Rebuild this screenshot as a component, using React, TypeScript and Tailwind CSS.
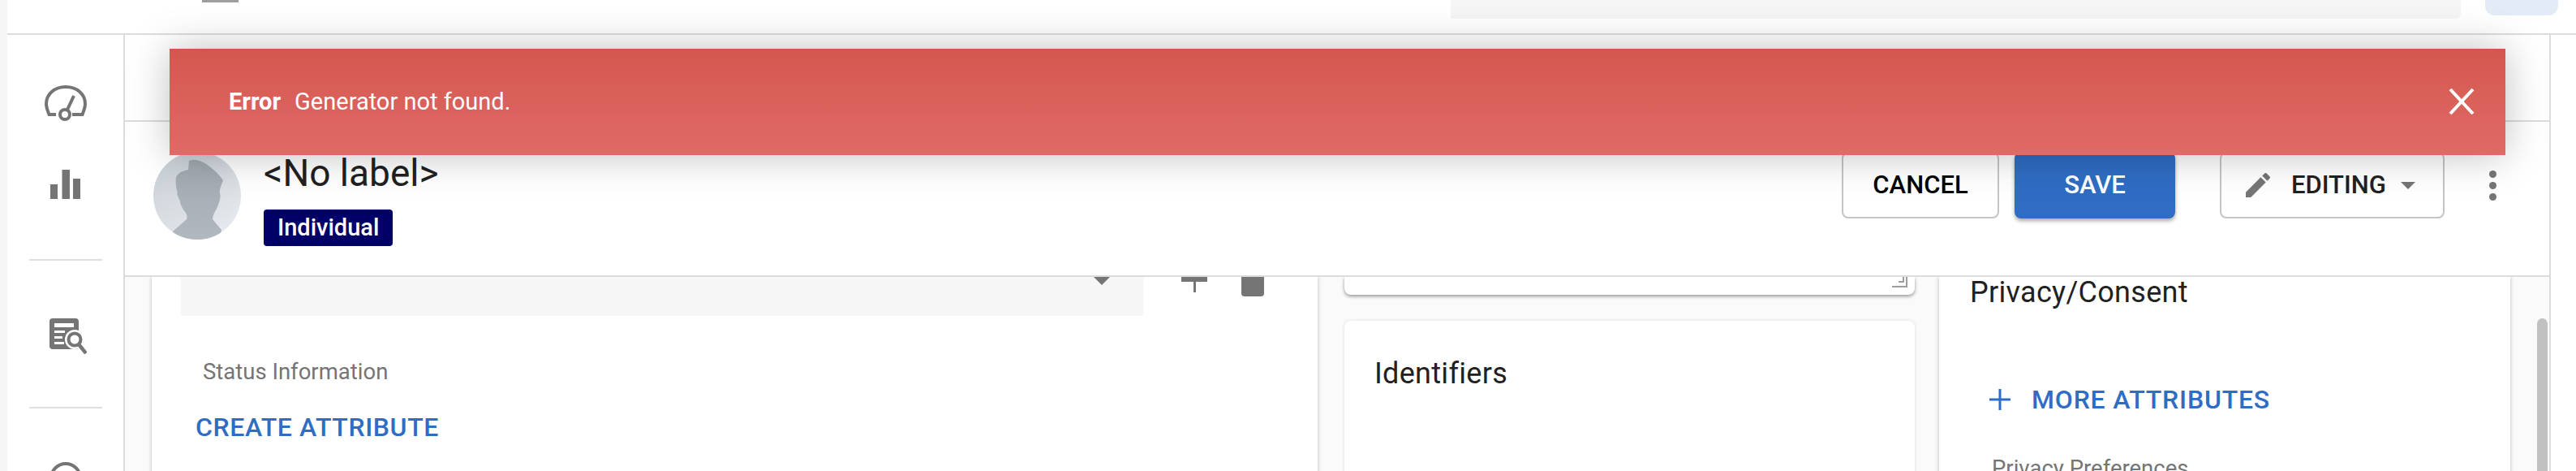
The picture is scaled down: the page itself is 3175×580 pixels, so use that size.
function GaugeIcon() {
  return (
    <svg width="52" height="44" viewBox="0 0 52 44" fill="none" stroke="#757575" strokeWidth="4" className="shrink-0">
      <path d="M14 36H5.500C3.500 31 2 27 2 23 2 11 12 2 26 2s24 9 24 21c0 4-1.500 8-3.500 13H34" />
      <circle cx="25" cy="36" r="6" />
      <path d="M28 30l8-17" strokeWidth="4" />
    </svg>
  );
}

function BarsIcon() {
  return (
    <svg width="37" height="36" viewBox="0 0 37 36" fill="#757575" className="block">
      <rect x="0" y="18" width="9" height="18" />
      <rect x="14.500" y="0" width="9.500" height="36" />
      <rect x="28" y="11" width="9" height="25" />
    </svg>
  );
}

function ListSearchIcon() {
  return (
    <svg width="46" height="44" viewBox="0 0 46 44" fill="none" className="block">
      <rect x="0" y="0" width="36" height="38" rx="4" fill="#757575" />
      <rect x="6" y="6" width="24" height="5" fill="#fff" />
      <rect x="6" y="15" width="13" height="3" fill="#fff" />
      <rect x="6" y="22" width="10" height="3" fill="#fff" />
      <rect x="6" y="29" width="12" height="3" fill="#fff" />
      <circle cx="31" cy="26" r="12" fill="#fff" />
      <circle cx="31" cy="26" r="7.500" stroke="#757575" strokeWidth="4" fill="#fff" />
      <path d="M36 32l9 11" stroke="#757575" strokeWidth="4.500" />
    </svg>
  );
}

function Avatar() {
  return (
    <svg width="108" height="108" viewBox="0 0 108 108" className="shrink-0">
      <defs>
        <linearGradient id="avatarBg" x1="0.2" y1="0" x2="0.8" y2="1">
          <stop offset="0" stopColor="#c8cfd5" />
          <stop offset="1" stopColor="#e8ebef" />
        </linearGradient>
        <linearGradient id="avatarFg" x1="0" y1="0" x2="0" y2="1">
          <stop offset="0" stopColor="#a1a8af" />
          <stop offset="1" stopColor="#b2b8bf" />
        </linearGradient>
        <clipPath id="avatarClip">
          <circle cx="54" cy="54" r="54" />
        </clipPath>
      </defs>
      <g clipPath="url(#avatarClip)">
        <rect width="108" height="108" fill="url(#avatarBg)" />
        <path
          d="M44 11c6-3 16 0 24 6 8 6 14 12 18 18-2 6-5 11-4 16 2 4-1 12-4 19-2 4-5 8-5 13l11 13-3 14H26l-2-12 17-15c1-3 0-5-1-8-3-3-7-10-7-14l-4-9 1-2c-2-4-3-14-2-19 2-5 9-8 15-9z"
          fill="url(#avatarFg)"
        />
      </g>
    </svg>
  );
}

export default function App() {
  return (
    <div className="relative flex h-[580px] w-[3175px] overflow-hidden bg-white font-['Roboto',sans-serif]">
      <div className="w-[9px] shrink-0 bg-[#f5f5f5]" />

      <div className="flex min-w-0 flex-1 flex-col">
        {/* top bar */}
        <div className="flex h-[43px] shrink-0 justify-between border-b-2 border-[#dcdcdc]">
          <div className="ml-[240px] h-[3px] w-[45px] bg-[#9e9e9e]" />
          <div className="flex items-start">
            <div className="h-[23px] w-[1245px] rounded-br-md bg-[#f5f5f5]" />
            <div className="ml-[30px] mr-[22px] h-[19px] w-[90px] rounded-b-xl bg-[#e3ecf6]" />
          </div>
        </div>

        <div className="flex min-h-0 flex-1">
          {/* sidebar */}
          <div className="flex w-[145px] shrink-0 flex-col items-center overflow-hidden border-r-2 border-[#dcdcdc] pt-[62px]">
            <GaugeIcon />
            <div className="mt-[60px] shrink-0">
              <BarsIcon />
            </div>
            <div className="mt-[74px] h-[2px] w-[90px] shrink-0 bg-[#e0e0e0]" />
            <div className="ml-[6px] mt-[71px] shrink-0">
              <ListSearchIcon />
            </div>
            <div className="mt-[65px] h-[2px] w-[90px] shrink-0 bg-[#e0e0e0]" />
            <div className="mt-[66px] h-[40px] w-[40px] shrink-0 rounded-full border-4 border-[#757575]" />
          </div>

          <div className="flex min-w-0 flex-1 flex-col">
            <div className="flex w-[2990px] flex-1 flex-col border-r-2 border-[#dcdcdc]">
              {/* tabs strip */}
              <div className="h-[107px] shrink-0 border-b-2 border-[#dcdcdc]" />

              {/* record header */}
              <div className="flex h-[191px] shrink-0 items-start border-b-2 border-[#dcdcdc] pl-[35px] pt-[37px]">
                <Avatar />
                <div className="ml-[28px] flex flex-col items-start">
                  <h1 className="text-[46px] font-normal leading-[52px] text-[#212121]">&lt;No label&gt;</h1>
                  <span className="mt-[19px] rounded-[4px] bg-[#000066] px-[17px] text-[29px] font-medium leading-[45px] text-white">
                    Individual
                  </span>
                </div>
                <div className="ml-auto flex items-start">
                  <button className="h-[82px] w-[194px] rounded-lg border-2 border-[#c4c4c4] bg-white text-[31px] font-medium text-black">
                    CANCEL
                  </button>
                  <button className="ml-[19px] h-[82px] w-[198px] rounded-lg bg-[#2f6dc4] text-[31px] font-medium text-white shadow-[0_3px_5px_rgba(0,0,0,0.35)]">
                    SAVE
                  </button>
                  <button className="ml-[55px] flex h-[82px] w-[277px] items-center rounded-lg border-2 border-[#c4c4c4] bg-white pl-[29px] text-[31px] font-medium text-[#212121]">
                    <svg width="40" height="40" viewBox="0 0 24 24" fill="#757575" className="-ml-[4px] shrink-0">
                      <path d="M3 17.250V21h3.750L17.810 9.940l-3.750-3.750L3 17.250zM20.710 7.040c.39-.39.39-1.020 0-1.410l-2.340-2.340c-.39-.39-1.020-.39-1.410 0l-1.830 1.830 3.750 3.750 1.830-1.830z" />
                    </svg>
                    <span className="ml-[21px]">EDITING</span>
                    <span className="ml-[18px] h-0 w-0 border-x-[9px] border-t-[9px] border-x-transparent border-t-[#757575]" />
                  </button>
                  <div className="ml-[55px] mr-[65px] flex h-[82px] flex-col items-center justify-center gap-[5px]">
                    <span className="h-[9px] w-[9px] rounded-full bg-[#757575]" />
                    <span className="h-[9px] w-[9px] rounded-full bg-[#757575]" />
                    <span className="h-[9px] w-[9px] rounded-full bg-[#757575]" />
                  </div>
                </div>
              </div>

              {/* form panels */}
              <div className="flex min-h-0 flex-1 overflow-hidden bg-[#fafafa]">
                <div className="ml-[33px] w-[1437px] shrink-0 bg-white pl-[36px] shadow-[0_0_5px_rgba(0,0,0,0.25)]">
                  <div className="flex items-start">
                    <div className="relative h-[48px] w-[1186px] bg-[#f6f6f6]">
                      <span className="absolute left-[1125px] top-0 h-0 w-0 border-x-[10px] border-t-[10px] border-x-transparent border-t-[#757575]" />
                    </div>
                    <div className="ml-[47px] flex flex-col items-center">
                      <div className="h-[6px] w-[32px] bg-[#757575]" />
                      <div className="h-[13px] w-[3px] bg-[#757575]" />
                    </div>
                    <div className="ml-[42px] h-[24px] w-[28px] rounded-b-[4px] bg-[#757575]" />
                  </div>
                  <p className="ml-[27px] mt-[53px] text-[27.500px] leading-[32px] text-[#757575]">Status Information</p>
                  <p className="ml-[18px] mt-[35px] text-[32px] font-medium leading-[34px] tracking-[0.6px] text-[#2f6dc4]">CREATE ATTRIBUTE</p>
                </div>

                <div className="ml-[33px] w-[703px] shrink-0">
                  <div className="relative h-[22px] rounded-b-lg bg-white shadow-[0_2px_4px_rgba(0,0,0,0.4)]">
                    <svg width="20" height="16" viewBox="0 0 20 16" className="absolute bottom-[8px] right-[8px]" fill="none" stroke="#9e9e9e" strokeWidth="2">
                      <path d="M0 14h18V0M8 8h6V0" />
                    </svg>
                  </div>
                  <div className="mt-[32px] h-[300px] rounded-lg bg-white pl-[37px] pt-[44px] shadow-[0_0_4px_rgba(0,0,0,0.12)]">
                    <p className="text-[36px] leading-[42px] tracking-[0.3px] text-[#212121]">Identifiers</p>
                  </div>
                </div>

                <div className="ml-[30px] w-[704px] shrink-0 bg-white pl-[38px] shadow-[0_0_5px_rgba(0,0,0,0.25)]">
                  <p className="text-[36px] leading-[38px] tracking-[0.3px] text-[#212121]">Privacy/Consent</p>
                  <div className="ml-[24px] mt-[96px] flex items-center text-[#2f6dc4]">
                    <svg width="26" height="26" viewBox="0 0 26 26" stroke="#2f6dc4" strokeWidth="3">
                      <path d="M13 0v26M0 13h26" />
                    </svg>
                    <span className="ml-[26px] text-[32px] font-medium leading-[34px] tracking-[0.8px]">MORE ATTRIBUTES</span>
                  </div>
                  <p className="ml-[27px] mt-[52px] whitespace-nowrap text-[27.500px] leading-[32px] text-[#757575]">Privacy Preferences</p>
                </div>

                {/* scrollbar */}
                <div className="ml-[33px] flex w-[13px] shrink-0 pt-[51px]">
                  <div className="h-[300px] w-[13px] rounded-t-full bg-[#c1c1c1]" />
                </div>
              </div>
            </div>
          </div>
        </div>
      </div>

      {/* error toast */}
      <div className="absolute left-[209px] top-[60px] flex h-[131px] w-[2879px] items-center justify-between bg-gradient-to-b from-[#d3574f] to-[#e16a66] pl-[73px] pr-[38px] text-[29px] text-white shadow-[0_0_50px_rgba(0,0,0,0.25)]">
        <p>
          <span className="font-bold">Error</span>
          <span className="ml-[17px]">Generator not found.</span>
        </p>
        <svg width="32" height="32" viewBox="0 0 32 32" stroke="#fff" strokeWidth="4" className="-mt-[1px]">
          <path d="M2 1l28 30M30 1L2 31" />
        </svg>
      </div>
    </div>
  );
}
